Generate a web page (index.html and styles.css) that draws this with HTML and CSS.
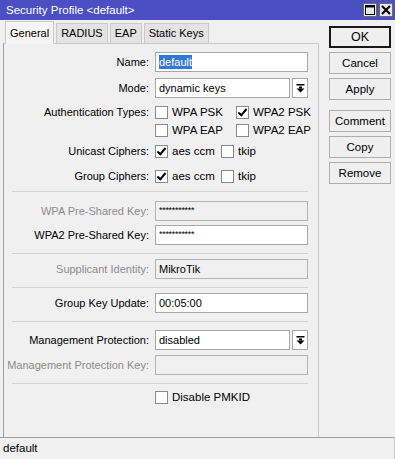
FILE: index.html
```html
<!DOCTYPE html>
<html lang="en">
<head>
<meta charset="UTF-8">
<title>Security Profile</title>
<link rel="stylesheet" href="styles.css">
</head>
<body>
<div class="window">
    <div class="titlebar">
        <span class="title">Security Profile &lt;default&gt;</span>
        <div class="win-buttons">
            <span class="win-btn">
                <svg width="12" height="12" viewBox="0 0 12 12"><rect x="1.5" y="1.5" width="9" height="9" fill="none" stroke="#000" stroke-width="1"/><line x1="1.5" y1="2.5" x2="10.5" y2="2.5" stroke="#000" stroke-width="2"/></svg>
            </span>
            <span class="win-btn">
                <svg width="12" height="12" viewBox="0 0 12 12"><path d="M2 2 L10 10 M10 2 L2 10" stroke="#000" stroke-width="2.2"/></svg>
            </span>
        </div>
    </div>

    <div class="content">
        <div class="main">
            <div class="tabs">
                <span class="tab active">General</span>
                <span class="tab">RADIUS</span>
                <span class="tab">EAP</span>
                <span class="tab">Static Keys</span>
            </div>

            <div class="panel">
                <div class="row first">
                    <label>Name:</label>
                    <div class="field"><span class="selected">default</span></div>
                </div>
                <div class="row loose">
                    <label>Mode:</label>
                    <div class="combo">
                        <div class="field">dynamic keys</div>
                        <span class="drop">
                            <svg width="9" height="9" viewBox="0 0 9 9"><rect x="0.5" y="0" width="8" height="1.5" fill="#000"/><rect x="3" y="2.5" width="3" height="2" fill="#000"/><path d="M0.5 4.5 L8.5 4.5 L4.5 8.5 Z" fill="#000"/></svg>
                        </span>
                    </div>
                </div>
                <div class="row check-row auth-top">
                    <label>Authentication Types:</label>
                    <div class="checks wide">
                        <span class="check"><span class="box"></span>WPA PSK</span>
                        <span class="check"><span class="box checked"></span>WPA2 PSK</span>
                    </div>
                </div>
                <div class="row check-row tight">
                    <label></label>
                    <div class="checks wide">
                        <span class="check"><span class="box"></span>WPA EAP</span>
                        <span class="check"><span class="box"></span>WPA2 EAP</span>
                    </div>
                </div>
                <div class="row check-row cipher-top">
                    <label>Unicast Ciphers:</label>
                    <div class="checks">
                        <span class="check"><span class="box checked"></span>aes ccm</span>
                        <span class="check"><span class="box"></span>tkip</span>
                    </div>
                </div>
                <div class="row check-row cipher-next">
                    <label>Group Ciphers:</label>
                    <div class="checks">
                        <span class="check"><span class="box checked"></span>aes ccm</span>
                        <span class="check"><span class="box"></span>tkip</span>
                    </div>
                </div>

                <div class="sep near"></div>

                <div class="row disabled">
                    <label>WPA Pre-Shared Key:</label>
                    <div class="field stars">***********</div>
                </div>
                <div class="row close">
                    <label>WPA2 Pre-Shared Key:</label>
                    <div class="field stars">***********</div>
                </div>

                <div class="sep"></div>

                <div class="row disabled">
                    <label>Supplicant Identity:</label>
                    <div class="field">MikroTik</div>
                </div>

                <div class="sep"></div>

                <div class="row">
                    <label>Group Key Update:</label>
                    <div class="field">00:05:00</div>
                </div>

                <div class="sep"></div>

                <div class="row spaced">
                    <label>Management Protection:</label>
                    <div class="combo">
                        <div class="field">disabled</div>
                        <span class="drop">
                            <svg width="9" height="9" viewBox="0 0 9 9"><rect x="0.5" y="0" width="8" height="1.5" fill="#000"/><rect x="3" y="2.5" width="3" height="2" fill="#000"/><path d="M0.5 4.5 L8.5 4.5 L4.5 8.5 Z" fill="#000"/></svg>
                        </span>
                    </div>
                </div>
                <div class="row disabled">
                    <label>Management Protection Key:</label>
                    <div class="field"></div>
                </div>

                <div class="sep"></div>

                <div class="row check-row pmkid">
                    <label></label>
                    <div class="checks">
                        <span class="check"><span class="box"></span>Disable PMKID</span>
                    </div>
                </div>
            </div>
        </div>

        <div class="actions">
            <button class="btn default">OK</button>
            <button class="btn">Cancel</button>
            <button class="btn">Apply</button>
            <button class="btn spaced">Comment</button>
            <button class="btn">Copy</button>
            <button class="btn">Remove</button>
        </div>
    </div>

    <div class="status">default</div>
</div>
</body>
</html>
```

FILE: styles.css
```css
body {
    margin: 0;
    padding: 0;
    font-family: "Liberation Sans", Arial, sans-serif;
    font-size: 11px;
    color: #000;
    background-color: #f0f0f0;
}

.window {
    width: 395px;
    height: 459px;
    display: flex;
    flex-direction: column;
    background-color: #f0f0f0;
    overflow: hidden;
}

.titlebar {
    height: 20px;
    flex-shrink: 0;
    background-color: #4b4fc2;
    display: flex;
    align-items: center;
    justify-content: space-between;
    padding: 0 2px 0 6px;
}

.title {
    color: #fff;
    font-size: 11.5px;
}

.win-buttons {
    display: flex;
    gap: 2px;
}

.win-btn {
    width: 14px;
    height: 14px;
    box-sizing: border-box;
    background-color: #e8e8e8;
    border: 1px solid #6a6a6a;
    display: flex;
    align-items: center;
    justify-content: center;
}

.content {
    flex: 1;
    display: flex;
}

.main {
    padding-left: 3px;
    display: flex;
    flex-direction: column;
}

.tabs {
    display: flex;
    align-items: flex-end;
    height: 23px;
    padding-left: 2px;
}

.tab {
    height: 19px;
    line-height: 19px;
    padding: 0 4px;
    margin-right: 2px;
    background-color: #e3e3e3;
    border: 1px solid #c9c9c9;
    border-bottom: none;
    font-size: 11px;
}

.tab.active {
    height: 22px;
    line-height: 22px;
    background-color: #f5f5f5;
    padding: 0 4px;
    position: relative;
    z-index: 1;
    margin-bottom: -1px;
}

.panel {
    width: 316px;
    flex: 1;
    box-sizing: border-box;
    border: 1px solid #c9c9c9;
    border-left-color: #9c9c9c;
    border-bottom: none;
    display: flex;
    flex-direction: column;
    padding-right: 10px;
}

.row {
    display: grid;
    grid-template-columns: 145px 1fr;
    column-gap: 6px;
    align-items: center;
    height: 20px;
    margin-top: 5px;
}

.row.first {
    margin-top: 8px;
}

.row.loose {
    margin-top: 6px;
}

.row.close {
    margin-top: 4px;
}

.row label {
    text-align: right;
    white-space: nowrap;
}

.row.disabled label {
    color: #8c8c8c;
}

.field {
    height: 20px;
    box-sizing: border-box;
    background-color: #fff;
    border: 1px solid #a8a8a8;
    padding: 0 3px;
    line-height: 18px;
    white-space: nowrap;
    overflow: hidden;
}

.row.disabled .field {
    background-color: #f0f0f0;
    border-color: #b4b4b4;
}

.field.stars {
    font-size: 9px;
    letter-spacing: -0.3px;
    line-height: 16px;
}

.selected {
    background-color: #3378d4;
    color: #fff;
    padding: 1px 0;
}

.combo {
    display: flex;
    gap: 2px;
}

.combo .field {
    flex: 1;
}

.drop {
    width: 16px;
    height: 20px;
    box-sizing: border-box;
    background-color: #fff;
    border: 1px solid #a8a8a8;
    display: flex;
    align-items: center;
    justify-content: center;
}

.check-row {
    height: 18px;
}

.check-row.auth-top {
    margin-top: 5px;
}

.check-row.tight {
    margin-top: 0;
}

.check-row.cipher-top {
    margin-top: 3px;
}

.check-row.cipher-next {
    margin-top: 7px;
}

.checks {
    display: grid;
    grid-template-columns: 66px 1fr;
}

.checks.wide {
    grid-template-columns: 81px 1fr;
}

.check {
    display: flex;
    align-items: center;
    gap: 4px;
    white-space: nowrap;
    font-size: 11.5px;
}

.box {
    width: 13px;
    height: 13px;
    box-sizing: border-box;
    background-color: #fff;
    border: 1px solid #8a8a8a;
    position: relative;
    flex-shrink: 0;
}

.box.checked::after {
    content: "";
    position: absolute;
    left: 3px;
    top: 0px;
    width: 3px;
    height: 7px;
    border: solid #000;
    border-width: 0 2px 2px 0;
    transform: rotate(40deg);
}

.sep {
    height: 1px;
    flex-shrink: 0;
    background-color: #d4d4d4;
    margin: 8px 0 0 8px;
}

.sep.near {
    margin-top: 6px;
}

.sep + .row {
    margin-top: 5px;
}

.sep.near + .row {
    margin-top: 9px;
}

.sep + .row.spaced {
    margin-top: 8px;
}

.sep + .row.pmkid {
    margin-top: 4px;
}

.actions {
    margin-left: 10px;
    padding-top: 6px;
    display: flex;
    flex-direction: column;
    gap: 4px;
}

.btn {
    width: 62px;
    height: 22px;
    margin: 0;
    font-family: "Liberation Sans", Arial, sans-serif;
    font-size: 11.5px;
    color: #000;
    background-color: #efefef;
    border: 1px solid #adadad;
    padding: 0;
}

.btn.default {
    border: 2px solid #1a1a1a;
    font-size: 12.5px;
}

.btn.spaced {
    margin-top: 6px;
}

.status {
    height: 22px;
    flex-shrink: 0;
    box-sizing: border-box;
    border-top: 1px solid #9c9c9c;
    border-right: 1px solid #c9c9c9;
    padding-left: 3px;
    line-height: 21px;
    font-size: 11.5px;
}
```
